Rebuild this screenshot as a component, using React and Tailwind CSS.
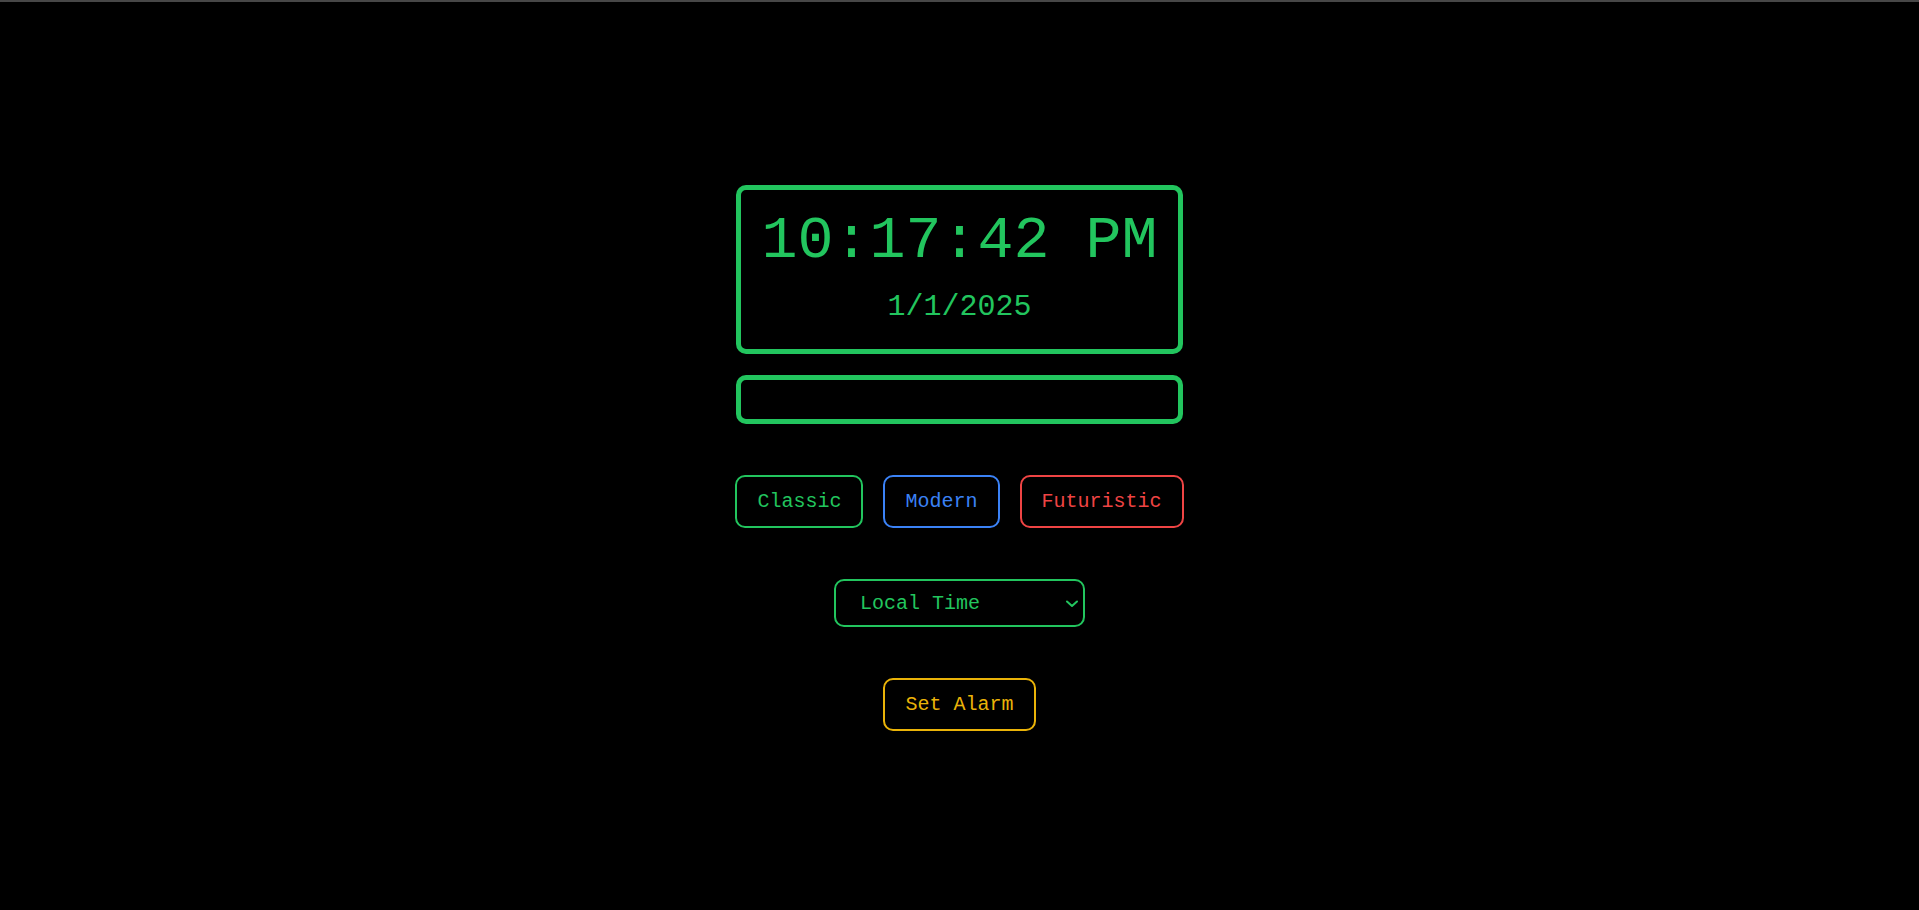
import { useState } from "react";

// =========================
// STYLE BUTTON
// =========================
function StyleButton({ label, className }) {
  return (
    <button
      className={`rounded-[10px] border-2 bg-black px-5 py-2.5 text-xl leading-[29px] ${className}`}
    >
      {label}
    </button>
  );
}

export default function App() {
  const [zone, setZone] = useState("local");

  return (
    <div className="min-h-screen bg-black border-t-2 border-[#474747] flex flex-col items-center pt-[183px] font-['Liberation_Mono','Courier_New',monospace]">
      {/* CLOCK */}
      <div className="flex flex-col">
        <div className="rounded-[10px] border-[5px] border-[#22c55e] px-5 pt-[21px] pb-[24px] text-center">
          <div className="text-[60px] leading-[60px] text-[#22c55e] whitespace-pre">
            10:17:42 PM
          </div>
          <div className="mt-[18px] text-[30px] leading-9 text-[#22c55e]">
            1/1/2025
          </div>
        </div>

        {/* ALARM BAR */}
        <div className="mt-[21px] h-[49px] rounded-[10px] border-[5px] border-[#22c55e]" />
      </div>

      {/* THEMES */}
      <div className="mt-[51px] flex gap-5">
        <StyleButton label="Classic" className="border-[#22c55e] text-[#22c55e]" />
        <StyleButton label="Modern" className="border-[#3b82f6] text-[#3b82f6]" />
        <StyleButton label="Futuristic" className="border-[#ef4444] text-[#ef4444]" />
      </div>

      {/* TIMEZONE */}
      <div className="relative mt-[51px]">
        <select
          value={zone}
          onChange={(e) => setZone(e.target.value)}
          className="w-[251px] appearance-none rounded-[10px] border-2 border-[#22c55e] bg-black pt-[9px] pb-[7px] pl-6 pr-8 text-xl leading-7 text-[#22c55e] outline-none"
        >
          <option value="local">Local Time</option>
          <option value="utc">UTC</option>
          <option value="ny">New York</option>
          <option value="tokyo">Tokyo</option>
        </select>
        <svg
          className="pointer-events-none absolute right-[7px] top-[21px]"
          width="12"
          height="8"
          viewBox="0 0 12 8"
          fill="none"
        >
          <polyline
            points="1,1.5 6,6 11,1.5"
            stroke="#22c55e"
            strokeWidth="2"
            strokeLinecap="round"
            strokeLinejoin="round"
          />
        </svg>
      </div>

      {/* ALARM */}
      <button className="mt-[51px] rounded-[10px] border-2 border-[#eab308] bg-black px-5 py-2.5 text-xl leading-[29px] text-[#eab308]">
        Set Alarm
      </button>
    </div>
  );
}
